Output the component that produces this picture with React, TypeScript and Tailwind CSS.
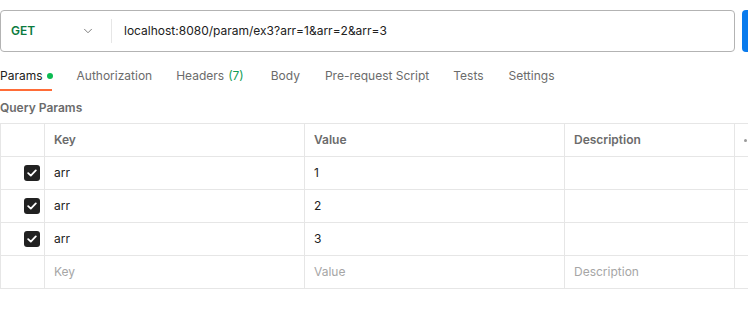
import { ChevronDown } from "lucide-react";

const rows = [
  { key: "arr", value: "1" },
  { key: "arr", value: "2" },
  { key: "arr", value: "3" },
];

const tabs = [
  { label: "Authorization", pad: "ml-[24px]" },
  { label: "Headers", pad: "ml-[24px]", count: "(7)" },
  { label: "Body", pad: "ml-[27px]" },
  { label: "Pre-request Script", pad: "ml-[25px]" },
  { label: "Tests", pad: "ml-[24px]" },
  { label: "Settings", pad: "ml-[25px]" },
];

function Check() {
  return (
    <div className="w-4 h-4 rounded-[3px] bg-[#212121] flex items-center justify-center">
      <svg width="10" height="8" viewBox="0 0 10 8" fill="none">
        <path d="M1.2 4.2 L3.8 6.6 L8.8 1.4" stroke="white" strokeWidth="1.8" strokeLinecap="round" strokeLinejoin="round" />
      </svg>
    </div>
  );
}

function Row({ first, cells, muted }: { first: React.ReactNode; cells: string[]; muted?: boolean }) {
  return (
    <div className="flex h-[33px] border-b border-[#e6e6e6]">
      <div className="w-[45px] shrink-0 border-l border-r border-[#e6e6e6] flex items-center justify-end pr-[4px]">{first}</div>
      {cells.map((c, i) => (
        <div
          key={i}
          className={`${i === 0 || i === 1 ? "w-[260px]" : "w-[170px]"} shrink-0 border-r border-[#e6e6e6] flex items-center pl-[9px] ${
            muted ? "text-[#a6a6a6]" : "text-[#212121]"
          }`}
        >
          {c}
        </div>
      ))}
      <div className="flex-1" />
    </div>
  );
}

export default function App() {
  return (
    <div className="w-[748px] h-[317px] bg-white overflow-hidden font-['Inter',sans-serif] text-[12px]">
      {/* URL bar */}
      <div className="flex mt-[10px] h-[42px]">
        <div className="w-[735px] shrink-0 border border-[#b3b3b3] rounded-[4px] flex items-center">
          <div className="w-[110px] flex items-center pl-[10px] pr-[16px] justify-between">
            <span className="font-semibold text-[#0b7a3e]">GET</span>
            <ChevronDown size={14} strokeWidth={1.5} className="text-[#6b6b6b]" />
          </div>
          <div className="w-px h-[24px] bg-[#e6e6e6]" />
          <span className="ml-[12px] text-[#212121]">localhost:8080/param/ex3?arr=1&amp;arr=2&amp;arr=3</span>
        </div>
        <div className="ml-[7px] flex-1 rounded-l-[4px] bg-[#097bed]" />
      </div>

      {/* Tabs */}
      <div className="flex items-end mt-[12px] h-[27px]">
        <div className="flex flex-col h-full">
          <div className="flex items-center h-[24px] text-[#212121]">
            Params
            <span className="ml-[4px] w-[6px] h-[6px] rounded-full bg-[#0cbb52]" />
          </div>
          <div className="h-[2px] bg-[#ff6c37] mt-auto w-[52px]" />
        </div>
        {tabs.map((t) => (
          <div key={t.label} className={`${t.pad} h-full flex items-start`}>
            <div className="h-[24px] flex items-center text-[#6b6b6b]">
              {t.label}
              {t.count && <span className="ml-[4px] text-[#0f9d58]">{t.count}</span>}
            </div>
          </div>
        ))}
      </div>

      <div className="mt-[9px] font-semibold text-[#6b6b6b] leading-[16px]">Query Params</div>

      {/* Table */}
      <div className="mt-[7px] border-t border-[#e6e6e6]">
        <div className="flex h-[33px] border-b border-[#e6e6e6] font-semibold text-[#6b6b6b]">
          <div className="w-[45px] shrink-0 border-l border-r border-[#e6e6e6]" />
          <div className="w-[260px] shrink-0 border-r border-[#e6e6e6] flex items-center pl-[9px]">Key</div>
          <div className="w-[260px] shrink-0 border-r border-[#e6e6e6] flex items-center pl-[9px]">Value</div>
          <div className="w-[170px] shrink-0 border-r border-[#e6e6e6] flex items-center pl-[9px]">Description</div>
          <div className="flex-1 flex items-center pl-[9px] gap-[2px]">
            <span className="w-[3px] h-[3px] rounded-full bg-[#9a9a9a]" />
            <span className="w-[3px] h-[3px] rounded-full bg-[#9a9a9a]" />
          </div>
        </div>
        {rows.map((r, i) => (
          <Row key={i} first={<Check />} cells={[r.key, r.value, ""]} />
        ))}
        <Row first={null} cells={["Key", "Value", "Description"]} muted />
      </div>
    </div>
  );
}
